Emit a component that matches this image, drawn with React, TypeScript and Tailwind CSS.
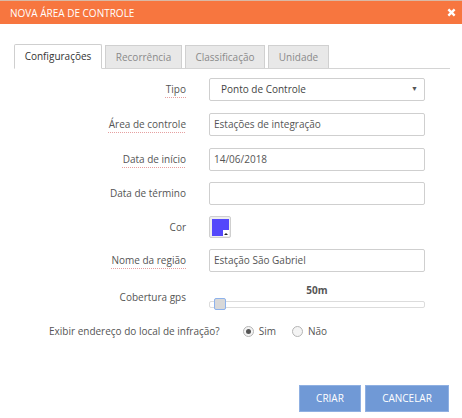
import { useState } from "react";

const labelBase = "w-[186px] shrink-0 text-right text-[10px] text-[#555]";
const marked =
  "underline decoration-dotted decoration-[#e6a0a0] underline-offset-[4px]";

type RowProps = {
  label: string;
  mark?: boolean;
  className?: string;
  children: React.ReactNode;
};

function Row({ label, mark, className, children }: RowProps) {
  return (
    <div className={`flex items-center ${className ?? ""}`}>
      <div className={labelBase}>
        <span className={mark ? marked : ""}>{label}</span>
      </div>
      <div className="ml-[23px] w-[216px]">{children}</div>
    </div>
  );
}

function TextBox({ value }: { value: string }) {
  return (
    <div className="flex h-[23px] items-center rounded-[2px] border border-[#cfcfcf] bg-white px-[4px] text-[10px] text-[#555]">
      {value}
    </div>
  );
}

export default function App() {
  const [showAddress, setShowAddress] = useState(true);
  const tabs = ["Configurações", "Recorrência", "Classificação", "Unidade"];

  return (
    <div
      className="h-[418px] w-[462px] overflow-hidden bg-white"
      style={{ fontFamily: '"Open Sans", "Noto Sans", sans-serif' }}
    >
      {/* Title bar */}
      <div className="flex h-[24px] items-center justify-between border-t border-[#d9b9a5] bg-[#f7763f] pl-[10px] pr-[6px] text-white">
        <span className="text-[10px] leading-none">NOVA ÁREA DE CONTROLE</span>
        <svg viewBox="0 0 10 10" className="h-[9px] w-[9px]" aria-hidden="true">
          <path
            d="M1.5 1.5 L8.5 8.5 M8.5 1.5 L1.5 8.5"
            stroke="white"
            strokeWidth={2.6}
            strokeLinecap="butt"
          />
        </svg>
      </div>

      {/* Tabs */}
      <div className="mx-[14px] mt-[20px] mr-[12px] flex gap-[3px] border-b border-[#d4d4d4]">
        {tabs.map((t, i) =>
          i === 0 ? (
            <div
              key={t}
              className="-mb-px flex h-[25px] w-[88px] items-center justify-center rounded-t-[2px] border border-b-white border-[#cfcfcf] bg-white text-[10px] text-[#333]"
            >
              {t}
            </div>
          ) : (
            <div
              key={t}
              className={`mt-[1px] flex h-[23px] items-center justify-center border border-b-0 border-[#d0d0d0] bg-[#e8e8e8] text-[10px] text-[#8a8a8a] ${
                i === 1 ? "w-[77px]" : i === 2 ? "w-[80px]" : "w-[61px]"
              }`}
            >
              {t}
            </div>
          )
        )}
      </div>

      {/* Form */}
      <div className="mt-[9px] flex flex-col">
        <Row label="Tipo" mark>
          <div className="flex h-[23px] items-center justify-between rounded-[2px] border border-[#cfcfcf] bg-white pl-[11px] pr-[6px] text-[10px] text-[#444]">
            <span>Ponto de Controle</span>
            <span className="text-[7px] text-[#555]">▼</span>
          </div>
        </Row>

        <Row label="Área de controle" mark className="mt-[12px]">
          <TextBox value="Estações de integração" />
        </Row>

        <Row label="Data de início" mark className="mt-[12px]">
          <TextBox value="14/06/2018" />
        </Row>

        <Row label="Data de término" className="mt-[11px]">
          <TextBox value="" />
        </Row>

        <Row label="Cor" className="mt-[11px]">
          <div className="relative h-[22px] w-[22px] rounded-[2px] border border-[#cfcfcf] bg-[#eeeeee]">
            <div className="absolute left-[2px] top-[2px] h-[17px] w-[17px] bg-[#5448fb]" />
            <div className="absolute bottom-[1px] right-[1px] flex h-[6px] w-[6px] items-end justify-center bg-white">
              <div className="mb-[1px] h-0 w-0 border-x-[2px] border-b-[2px] border-x-transparent border-b-[#222]" />
            </div>
          </div>
        </Row>

        <Row label="Nome da região" mark className="mt-[11px]">
          <TextBox value="Estação São Gabriel" />
        </Row>

        <Row label="Cobertura gps" className="mt-[12px]">
          <div className="flex flex-col">
            <div className="text-center text-[10px] font-bold leading-[13px] text-[#555]">
              50m
            </div>
            <div className="relative mt-[1px] h-[12px]">
              <div className="absolute left-0 right-0 top-[3px] h-[7px] rounded-[2px] border border-[#dcdcdc] bg-white" />
              <div className="absolute left-[5px] top-0 h-[12px] w-[12px] rounded-[2px] border border-[#8db2ec] bg-[#d8d8d8]" />
            </div>
          </div>
        </Row>

        <div className="mt-[14px] flex items-center text-[10px] text-[#555]">
          <span className="ml-[49px]">Exibir endereço do local de infração?</span>
          <label
            className="ml-[23px] flex cursor-pointer items-center"
            onClick={() => setShowAddress(true)}
          >
            <span className="flex h-[11px] w-[11px] items-center justify-center rounded-full border border-[#b5b5b5] bg-[#f4f4f4]">
              {showAddress && <span className="h-[5px] w-[5px] rounded-full bg-[#555]" />}
            </span>
            <span className="ml-[5px]">Sim</span>
          </label>
          <label
            className="ml-[16px] flex cursor-pointer items-center"
            onClick={() => setShowAddress(false)}
          >
            <span className="flex h-[11px] w-[11px] items-center justify-center rounded-full border border-[#b5b5b5] bg-[#f4f4f4]">
              {!showAddress && <span className="h-[5px] w-[5px] rounded-full bg-[#555]" />}
            </span>
            <span className="ml-[5px]">Não</span>
          </label>
        </div>
      </div>

      {/* Actions */}
      <div className="mr-[13px] mt-[46px] flex justify-end gap-[4px]">
        <button className="h-[27px] w-[62px] border border-[#8fb0e2] bg-[#7099d6] text-[10px] text-white">
          CRIAR
        </button>
        <button className="h-[27px] w-[84px] border border-[#8fb0e2] bg-[#7099d6] text-[10px] text-white">
          CANCELAR
        </button>
      </div>
    </div>
  );
}
